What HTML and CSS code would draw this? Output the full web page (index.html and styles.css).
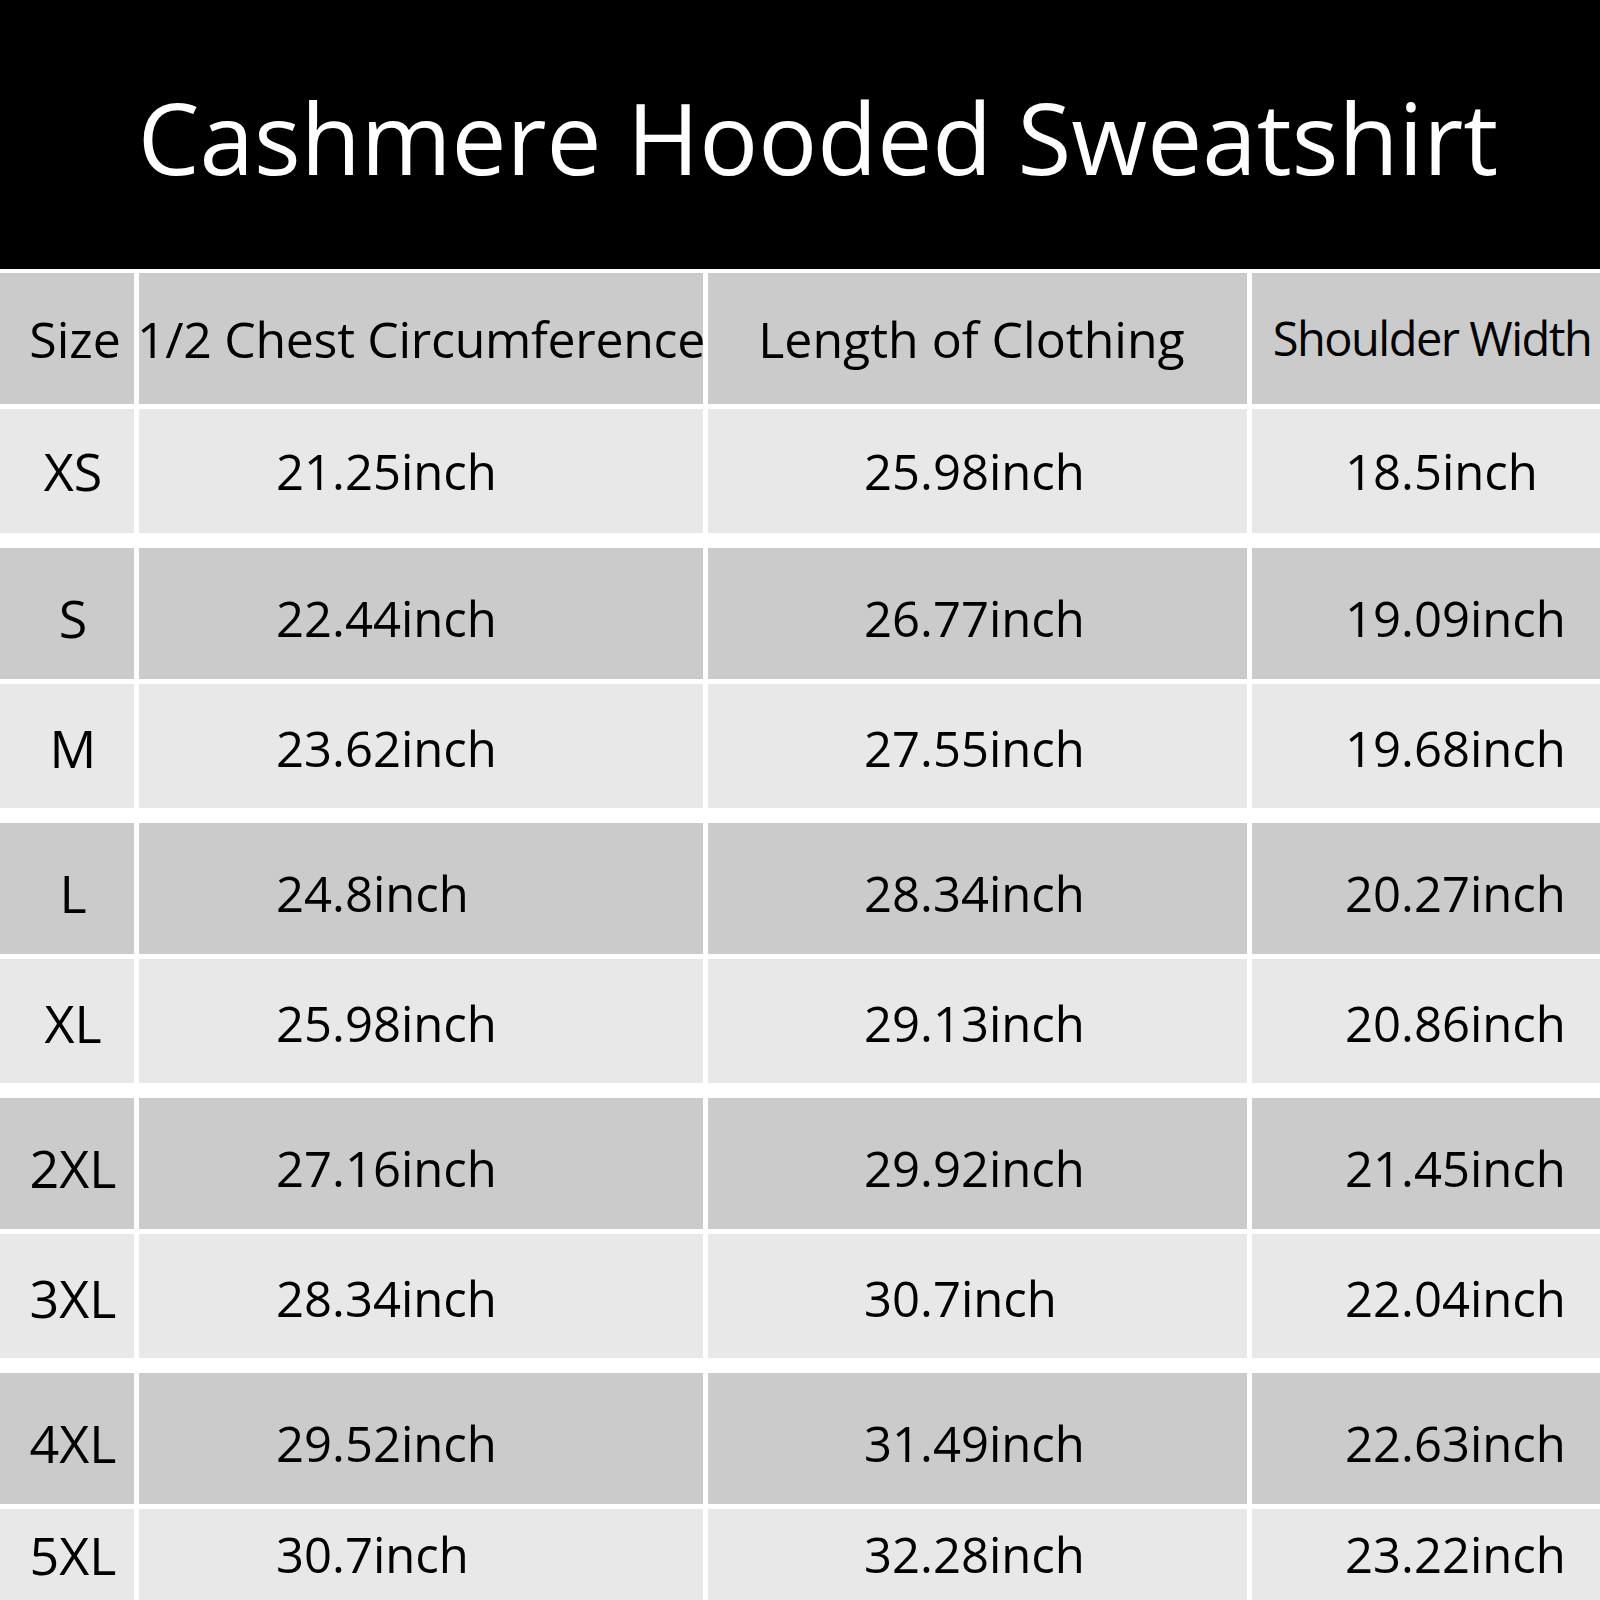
FILE: index.html
```html
<!DOCTYPE html>
<html lang="en">
<head>
<meta charset="utf-8">
<title>Cashmere Hooded Sweatshirt</title>
<link rel="stylesheet" href="styles.css">
</head>
<body>
<div class="page">
  <header class="banner">
    <h1 class="title">Cashmere Hooded Sweatshirt</h1>
  </header>
  <div class="table">
    <div class="group">
      <div class="row dark head">
        <div class="cell size">Size</div>
        <div class="cell chest">1/2 Chest Circumference</div>
        <div class="cell length">Length of Clothing</div>
        <div class="cell narrow">Shoulder Width</div>
      </div>
      <div class="row light first">
        <div class="cell size">XS</div>
        <div class="cell c2">21.25inch</div>
        <div class="cell c3">25.98inch</div>
        <div class="cell c4">18.5inch</div>
      </div>
    </div>
    <div class="group">
      <div class="row dark">
        <div class="cell size">S</div>
        <div class="cell c2">22.44inch</div>
        <div class="cell c3">26.77inch</div>
        <div class="cell c4">19.09inch</div>
      </div>
      <div class="row light">
        <div class="cell size">M</div>
        <div class="cell c2">23.62inch</div>
        <div class="cell c3">27.55inch</div>
        <div class="cell c4">19.68inch</div>
      </div>
    </div>
    <div class="group">
      <div class="row dark">
        <div class="cell size">L</div>
        <div class="cell c2">24.8inch</div>
        <div class="cell c3">28.34inch</div>
        <div class="cell c4">20.27inch</div>
      </div>
      <div class="row light">
        <div class="cell size">XL</div>
        <div class="cell c2">25.98inch</div>
        <div class="cell c3">29.13inch</div>
        <div class="cell c4">20.86inch</div>
      </div>
    </div>
    <div class="group">
      <div class="row dark">
        <div class="cell size">2XL</div>
        <div class="cell c2">27.16inch</div>
        <div class="cell c3">29.92inch</div>
        <div class="cell c4">21.45inch</div>
      </div>
      <div class="row light">
        <div class="cell size">3XL</div>
        <div class="cell c2">28.34inch</div>
        <div class="cell c3">30.7inch</div>
        <div class="cell c4">22.04inch</div>
      </div>
    </div>
    <div class="group last">
      <div class="row dark">
        <div class="cell size">4XL</div>
        <div class="cell c2">29.52inch</div>
        <div class="cell c3">31.49inch</div>
        <div class="cell c4">22.63inch</div>
      </div>
      <div class="row light end">
        <div class="cell size">5XL</div>
        <div class="cell c2">30.7inch</div>
        <div class="cell c3">32.28inch</div>
        <div class="cell c4">23.22inch</div>
      </div>
    </div>
  </div>
</div>
</body>
</html>
```

FILE: styles.css
```css
html, body {
  margin: 0;
  padding: 0;
  background: #ffffff;
}

.page {
  width: 1600px;
  height: 1600px;
  overflow: hidden;
  font-family: "Open Sans", "Noto Sans", "Liberation Sans", sans-serif;
  color: #000;
  display: flex;
  flex-direction: column;
  gap: 4px;
}

.banner {
  height: 269px;
  background: #000;
  display: flex;
  align-items: center;
  justify-content: center;
  flex-shrink: 0;
}

.title {
  margin: 0;
  padding-left: 36px;
  padding-top: 4px;
  color: #fff;
  font-weight: 400;
  font-size: 98px;
  line-height: 1;
}

.table {
  flex: 1;
  min-height: 0;
  display: flex;
  flex-direction: column;
  gap: 15px;
}

.group {
  display: flex;
  flex-direction: column;
  gap: 5px;
}

.group.last {
  flex: 1;
  min-height: 0;
}

.row {
  display: grid;
  grid-template-columns: 134px 564px 539px 348px;
  column-gap: 5px;
}

.row.dark { height: 131px; }
.row.light { height: 124px; }
.row.light.end { height: auto; flex: 1; }

.row.dark .cell { background: #cbcbcb; padding-top: 9px; }
.row.light .cell { background: #e8e8e8; padding-top: 4px; }
.row.dark.head .cell { padding-top: 0; }
.row.light.first .cell { padding-top: 0; }
.row.light.end .cell { padding-top: 0; }

.cell {
  display: flex;
  align-items: center;
  font-size: 49px;
  line-height: 1;
  white-space: nowrap;
}

.head .cell {
  justify-content: center;
  font-size: 50px;
}

.head .cell.chest {
  letter-spacing: -0.3px;
}

.head .cell.length {
  padding-right: 12px;
}

.head .cell.narrow {
  font-size: 47px;
  letter-spacing: -1.5px;
  padding-left: 12px;
}

.cell.size {
  justify-content: center;
  padding-left: 12px;
  font-size: 52px;
}

.head .cell.size {
  padding-left: 16px;
  font-size: 50px;
}

.cell.c2 { padding-left: 137px; }
.cell.c3 { padding-left: 156px; }
.cell.c4 { padding-left: 93px; }
```
